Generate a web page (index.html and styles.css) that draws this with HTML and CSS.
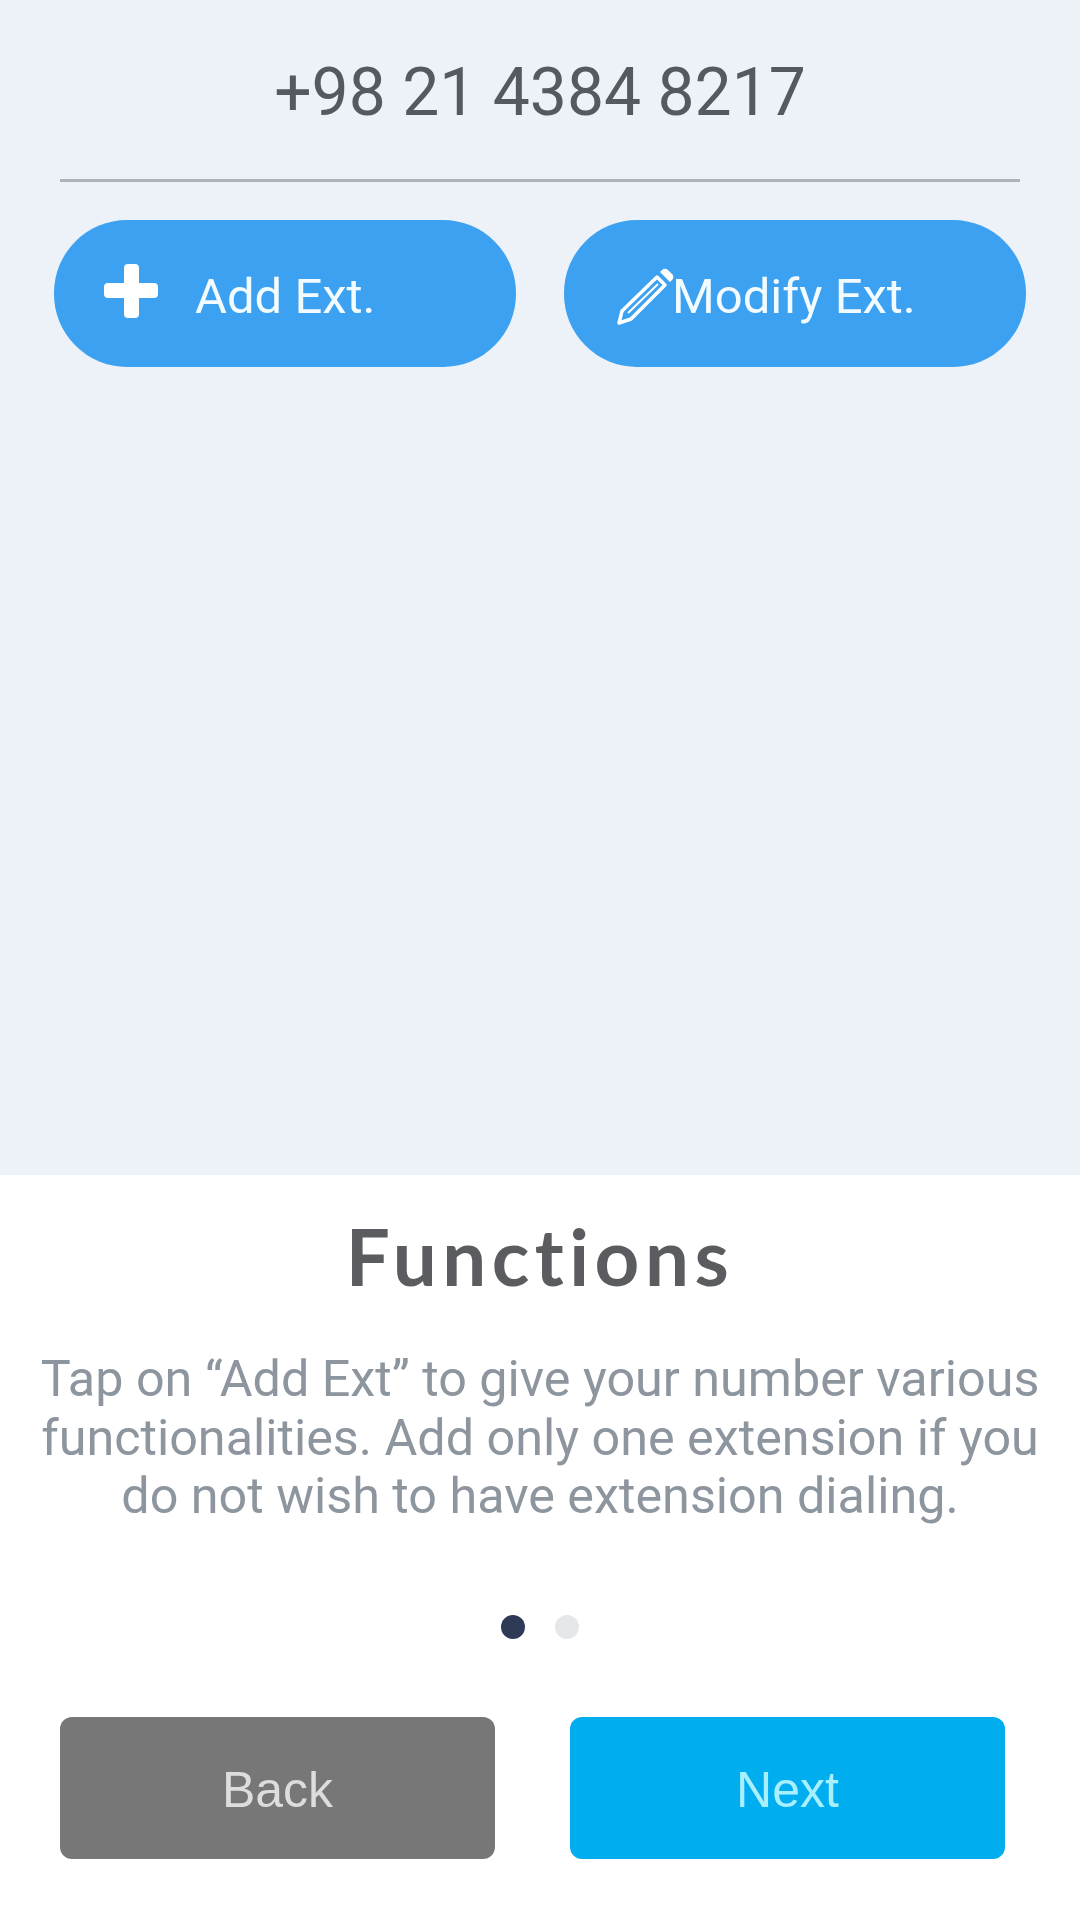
FILE: index.html
```html
<!DOCTYPE html>
<html lang="en">
<head>
<meta charset="UTF-8">
<meta name="viewport" content="width=device-width, initial-scale=1.0">
<title>Functions</title>
<link rel="stylesheet" href="styles.css">
</head>
<body>
<div class="top">
    <div class="phone">+98 21 4384 8217</div>
    <div class="divider"></div>
    <div class="ext-buttons">
        <div class="pill pill-add">
            <svg class="icon-plus" width="54" height="54" viewBox="0 0 54 54">
                <rect x="20" y="0" width="15" height="54" rx="4" fill="#fff"/>
                <rect x="0" y="19" width="54" height="15" rx="4" fill="#fff"/>
            </svg>
            <span>Add Ext.</span>
        </div>
        <div class="pill pill-modify">
            <svg class="icon-pencil" width="60" height="60" viewBox="0 0 60 60">
                <path d="M3 57l3-12L41 11l8 8-34 34z" stroke="#fff" stroke-width="3.5" stroke-linejoin="round" fill="none"/>
                <path d="M12 47L42 18" stroke="#fff" stroke-width="2" fill="none"/>
                <path d="M46 4a4 4 0 0 1 6 0l4 4a4 4 0 0 1 0 6l-2 2-10-10z" fill="#fff"/>
            </svg>
            <span>Modify Ext.</span>
        </div>
    </div>
</div>

<div class="bottom">
    <div class="title">Functions</div>
    <div class="desc">Tap on “Add Ext” to give your number various<br>functionalities. Add only one extension if you<br>do not wish to have extension dialing.</div>
    <div class="dots">
        <div class="dot dot-active"></div>
        <div class="dot"></div>
    </div>
    <div class="nav">
        <div class="nav-btn nav-back">Back</div>
        <div class="nav-btn nav-next">Next</div>
    </div>
</div>
</body>
</html>
```

FILE: styles.css
```css
body {
    margin: 0;
    padding: 0;
    font-family: Roboto, Arial, sans-serif;
    background-color: #fff;
}

.top {
    height: 1175px;
    box-sizing: border-box;
    padding-top: 57px;
    background-color: #edf2f8;
}

.phone {
    text-align: center;
    font-size: 66px;
    line-height: 72px;
    color: #555a60;
}

.divider {
    height: 3px;
    margin: 50px 60px 0;
    background-color: #adb2b8;
}

.ext-buttons {
    display: flex;
    justify-content: space-between;
    margin: 38px 54px 0;
}

.pill {
    width: 462px;
    height: 147px;
    display: flex;
    align-items: center;
    box-sizing: border-box;
    border-radius: 73px;
    background-color: #3ba1f0;
    color: #f2fbff;
    font-size: 49px;
}

.pill span {
    padding-top: 5px;
}

.pill-add {
    padding-left: 50px;
}

.pill-add span {
    margin-left: 37px;
}

.icon-plus {
    margin-bottom: 6px;
}

.pill-modify {
    padding-left: 52px;
}

.pill-modify span {
    margin-left: -4px;
}

.icon-pencil {
    margin-top: 4px;
}

.bottom {
    text-align: center;
}

.title {
    margin-top: 37px;
    font-family: Lato, Arial, sans-serif;
    font-weight: 700;
    font-size: 78px;
    line-height: 88px;
    letter-spacing: 5.5px;
    color: #5a5c5f;
}

.desc {
    margin-top: 50px;
    font-size: 50.3px;
    line-height: 58.5px;
    color: #8d959e;
}

.dots {
    display: flex;
    justify-content: center;
    gap: 30px;
    margin-top: 89px;
}

.dot {
    width: 24px;
    height: 24px;
    border-radius: 50%;
    background-color: #e6e7e9;
}

.dot-active {
    background-color: #2f3a57;
}

.nav {
    display: flex;
    justify-content: space-between;
    margin: 78px 75px 0 60px;
}

.nav-btn {
    width: 435px;
    height: 142px;
    border-radius: 12px;
    font-family: "Liberation Sans", Arial, sans-serif;
    font-size: 50px;
    line-height: 146px;
}

.nav-back {
    background-color: #777;
    color: #ddd;
}

.nav-next {
    background-color: #00aeef;
    color: #a8efff;
}
```
